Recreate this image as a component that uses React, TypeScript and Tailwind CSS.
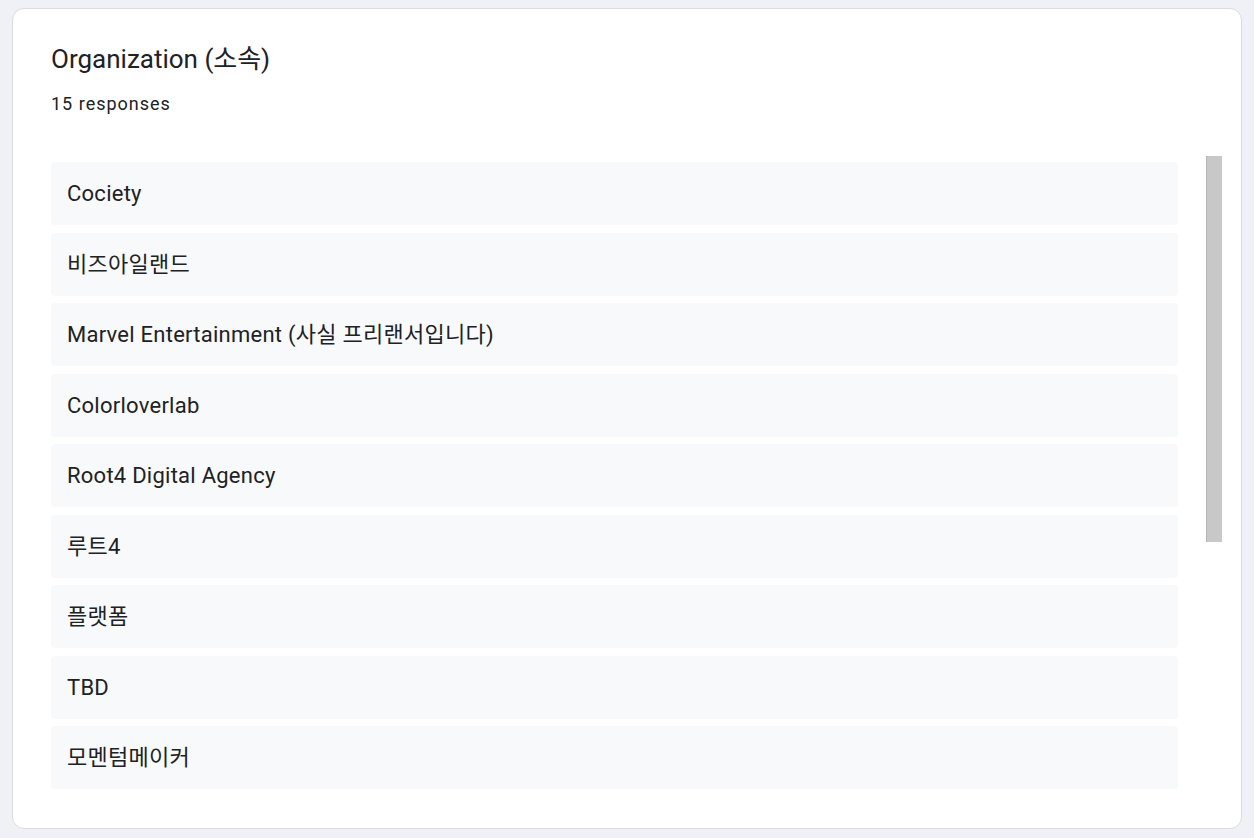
const responses = [
  'Cociety',
  '비즈아일랜드',
  'Marvel Entertainment (사실 프리랜서입니다)',
  'Colorloverlab',
  'Root4 Digital Agency',
  '루트4',
  '플랫폼',
  'TBD',
  '모멘텀메이커',
  'Freelancer',
  '디자인스튜디오',
  'Studio K',
  '개인',
  'Naver',
  'Kakao',
];

export default function App() {
  return (
    <div
      className="min-h-screen bg-[#f0f1f6] pt-2 pl-3 pr-3"
      style={{ fontFamily: 'Roboto, "Noto Sans CJK KR", sans-serif' }}
    >
      <div className="w-[1230px] h-[821px] bg-white rounded-xl border border-[#dadce0] pl-[38px] pt-[34px] pr-[19px]">
        <h2 className="text-[26px] leading-8 text-[#202124]">Organization (소속)</h2>
        <p className="mt-[17px] text-[18px] leading-6 tracking-[1px] text-[#202124]">15 responses</p>

        <div className="mt-[40px] flex h-[640px]">
          <div className="flex-1 overflow-hidden pt-[6px] flex flex-col gap-[7.5px]">
            {responses.map((r) => (
              <div
                key={r}
                className="shrink-0 h-[63px] rounded bg-[#f8f9fa] px-4 flex items-center text-[22px] tracking-[0.25px] text-[#202124]"
              >
                {r}
              </div>
            ))}
          </div>
          <div className="w-[16px] ml-[28px] shrink-0">
            <div className="h-[386px] bg-[#c8c8c8] border-l border-[#b5b5b5]" />
          </div>
        </div>
      </div>
    </div>
  );
}
